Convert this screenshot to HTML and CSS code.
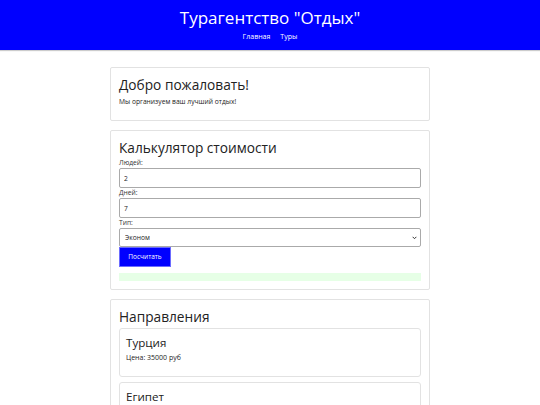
FILE: index.html
```html
<!DOCTYPE html>
<html lang="ru">
<head>
<meta charset="utf-8">
<title>Турагентство "Отдых"</title>
<link rel="stylesheet" href="styles.css">
</head>
<body>
<header class="site-header">
  <h1 class="site-title">Турагентство "Отдых"</h1>
  <nav class="site-nav">
    <a href="#" class="nav-link">Главная</a>
    <a href="#" class="nav-link">Туры</a>
  </nav>
</header>
<main class="container">
  <section class="panel">
    <h2 class="panel-title">Добро пожаловать!</h2>
    <p class="panel-text">Мы организуем ваш лучший отдых!</p>
  </section>
  <section class="panel">
    <h2 class="panel-title">Калькулятор стоимости</h2>
    <form class="calc">
      <label class="field-label">Людей:</label>
      <input class="field" type="number" value="2">
      <label class="field-label">Дней:</label>
      <input class="field" type="number" value="7">
      <label class="field-label">Тип:</label>
      <div class="select-wrap">
        <select class="field field-select">
          <option>Эконом</option>
        </select>
        <svg class="select-arrow" viewBox="0 0 8 5" width="5" height="3.5" aria-hidden="true"><path d="M1 1l3 3 3-3" fill="none" stroke="#333" stroke-width="1.6"/></svg>
      </div>
      <button type="button" class="btn">Посчитать</button>
      <div class="result"></div>
    </form>
  </section>
  <section class="panel">
    <h2 class="panel-title">Направления</h2>
    <div class="tour">
      <h3 class="tour-title">Турция</h3>
      <p class="tour-price">Цена: 35000 руб</p>
    </div>
    <div class="tour">
      <h3 class="tour-title">Египет</h3>
      <p class="tour-price">Цена: 40000 руб</p>
    </div>
  </section>
</main>
</body>
</html>
```
FILE: styles.css
```css
* { box-sizing: border-box; }
body {
  margin: 0;
  font-family: "Open Sans", "Noto Sans", sans-serif;
  color: #222;
  background: #fff;
}
.site-header {
  background: #0000ff;
  color: #fff;
  text-align: center;
  height: 50px;
  padding-top: 7px;
  box-shadow: 0 1px 1px rgba(0,0,0,0.2);
}
.site-title {
  margin: 0;
  font-size: 17px;
  font-weight: 400;
  line-height: 22px;
}
.site-nav {
  display: flex;
  justify-content: center;
  gap: 10px;
  margin-top: 2px;
}
.nav-link {
  color: #fff;
  text-decoration: none;
  font-size: 7px;
  line-height: 12px;
}
.container {
  width: 320px;
  margin: 17px auto 0;
  display: flex;
  flex-direction: column;
  gap: 9px;
}
.panel {
  border: 1px solid #e2e2e2;
  border-radius: 2px;
  padding: 8px;
}
.panel-title {
  margin: 0;
  font-size: 13.7px;
  font-weight: 400;
  line-height: 18px;
  color: #222;
}
.panel-text {
  margin: 2.5px 0 6.5px;
  font-size: 6.7px;
  line-height: 9px;
}
.calc {
  display: flex;
  flex-direction: column;
  padding-top: 1px;
}
.field-label {
  font-size: 6.7px;
  line-height: 10px;
  color: #333;
}
.field {
  width: 100%;
  height: 20px;
  border: 1px solid #aaa;
  border-radius: 2px;
  padding: 0 4px;
  font-family: inherit;
  font-size: 6.7px;
  color: #222;
  background: #fff;
}
.select-wrap {
  position: relative;
}
.field-select {
  display: block;
  height: 19px;
  appearance: none;
  -webkit-appearance: none;
  padding: 0 5px;
}
.select-arrow {
  position: absolute;
  right: 4px;
  top: 8px;
}
.btn {
  align-self: flex-start;
  width: 52px;
  height: 19.5px;
  background: #0000ff;
  color: #fff;
  border: 1px solid #6b6bff;
  font-family: inherit;
  font-size: 6.5px;
  padding: 0;
}
.result {
  margin-top: 6px;
  height: 8px;
  background: #e6ffe6;
}
.tour {
  border: 1px solid #e2e2e2;
  border-radius: 3px;
  padding: 6px;
  margin-top: 2px;
  height: 49px;
}
.tour + .tour { margin-top: 5px; }
.tour-title {
  margin: 0;
  font-size: 11.6px;
  font-weight: 400;
  line-height: 16px;
}
.tour-price {
  margin: 2px 0 0;
  font-size: 7px;
  line-height: 10px;
}
```
